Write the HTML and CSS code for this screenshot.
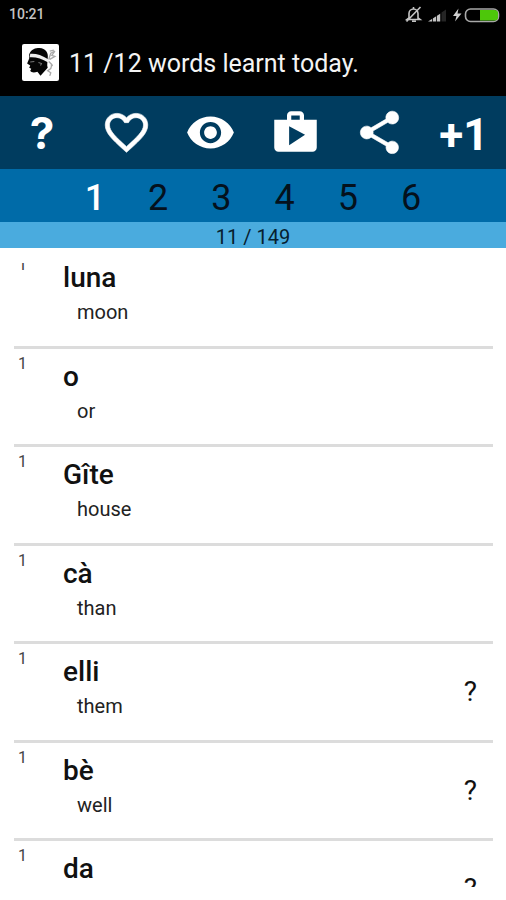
FILE: index.html
```html
<!DOCTYPE html>
<html lang="en">
<head>
<meta charset="utf-8">
<meta name="viewport" content="width=device-width, initial-scale=1">
<title>Words learnt</title>
<link rel="stylesheet" href="styles.css">
</head>
<body>
<div class="status">
  <span class="clock">10:21</span>
  <svg class="status-icons" viewBox="0 0 96 18" aria-hidden="true">
    <g fill="none" stroke="#c4c4c4" stroke-width="1.6">
      <path d="M4 13V8.500a4.500 4.500 0 0 1 9 0V13l2 1.500H2L4 13M7 16.200h4M8.500 4V2M1.500 16.500L15.500 2"/>
    </g>
    <path d="M23 16.500L35.500 8.500v8z" fill="#c4c4c4"/>
    <path d="M27.500 9v8M31.500 7v10M35.800 6v11" stroke="#000" stroke-width=".8"/>
    <path d="M36.500 7.500L41 4.500v12h-4.500z" fill="#252525"/>
    <path d="M53.500 3.500L48 11h3.500l-1.500 5.500 6.500-8h-4z" fill="#d0d0d0"/>
    <rect x="60.500" y="4" width="33" height="12.500" rx="5" fill="#000" stroke="#a8a8a8" stroke-width="1.600"/>
    <path d="M75 5h14.500q3.500 0 3.500 3.500v3.500q0 3.500-3.500 3.500H75z" fill="#4dc70a"/>
  </svg>
</div>
<header class="title-bar">
  <svg class="logo" viewBox="0 0 36 36" aria-hidden="true">
    <rect width="36" height="36" rx="2" fill="#fff"/>
    <path d="M7 10C9 5 13 4 17 4c6 0 9 5 8 10 0 4-1 6 0 9l-7 8-3-4c-3 1-6 1-7-1l1-2-2-1 1-2-3-2 2-5z" fill="#050505"/>
    <path d="M8 9.500c5-.5 11 1 18 5.500l-.5 3C19 14 13 12.500 7.500 13z" fill="#eee"/>
    <path d="M8 17.500l4-.5M16 18l3 1-1 2" fill="none" stroke="#777" stroke-width="1"/>
    <path d="M26 15l2-6 4-2-3 4 3 1-5 3M27 7l4-1M26 17l3 3-1 4-3 2 3 2-1 3M28 20l2 1" fill="none" stroke="#aaa" stroke-width="1.300"/>
  </svg>
  <h1>11 /12 words learnt today.</h1>
</header>
<nav class="toolbar">
  <button type="button" class="glyph help" aria-label="Help">?</button>
  <button type="button" aria-label="Favourites"><svg viewBox="0 0 24 24"><path d="M16.500 3c-1.740 0-3.410.81-4.500 2.090C10.910 3.810 9.240 3 7.500 3 4.420 3 2 5.420 2 8.500c0 3.780 3.400 6.860 8.550 11.540L12 21.350l1.450-1.320C18.600 15.360 22 12.280 22 8.500 22 5.420 19.580 3 16.500 3zm-4.400 15.550l-.1.100-.1-.1C7.140 14.240 4 11.390 4 8.500 4 6.500 5.500 5 7.500 5c1.540 0 3.040.99 3.570 2.360h1.870C13.460 5.990 14.960 5 16.500 5c2 0 3.500 1.500 3.500 3.500 0 2.890-3.140 5.740-7.900 10.050z" stroke="currentColor" stroke-width=".3"/></svg></button>
  <button type="button" aria-label="Show"><svg viewBox="0 0 24 24"><path d="M12 4.500C7 4.500 2.730 7.610 1 12c1.730 4.390 6 7.500 11 7.500s9.270-3.110 11-7.500c-1.730-4.390-6-7.500-11-7.500zM12 17c-2.760 0-5-2.240-5-5s2.240-5 5-5 5 2.240 5 5-2.240 5-5 5zm0-8c-1.660 0-3 1.340-3 3s1.340 3 3 3 3-1.340 3-3-1.340-3-3-3z"/></svg></button>
  <button type="button" aria-label="Store"><svg viewBox="0 0 24 24"><path d="M16 6V4c0-1.110-.89-2-2-2h-4c-1.110 0-2 .89-2 2v2H2v13c0 1.110.89 2 2 2h16c1.110 0 2-.89 2-2V6h-6zm-6-2h4v2h-4V4zM9 18V9l7.500 4L9 18z"/></svg></button>
  <button type="button" aria-label="Share"><svg viewBox="0 0 24 24"><path d="M18 16.080c-.76 0-1.440.3-1.960.77L8.910 12.700c.05-.23.09-.46.09-.7s-.04-.47-.09-.7l7.050-4.110c.54.5 1.250.81 2.040.81 1.660 0 3-1.340 3-3s-1.340-3-3-3-3 1.340-3 3c0 .24.04.47.09.7L8.040 9.810C7.500 9.310 6.790 9 6 9c-1.660 0-3 1.340-3 3s1.340 3 3 3c.79 0 1.500-.31 2.040-.81l7.120 4.160c-.05.21-.08.43-.08.65 0 1.610 1.310 2.920 2.920 2.920s2.920-1.310 2.920-2.920-1.310-2.920-2.920-2.920z" stroke="currentColor" stroke-width=".3"/></svg></button>
  <button type="button" class="glyph">+1</button>
</nav>
<nav class="levels">
  <button type="button" class="current">1</button>
  <button type="button">2</button>
  <button type="button">3</button>
  <button type="button">4</button>
  <button type="button">5</button>
  <button type="button">6</button>
</nav>
<div class="progress">11 / 149</div>
<main class="words">
  <article class="row"><span class="level scrolled">1</span><div class="entry"><h2>luna</h2><p>moon</p></div></article>
  <article class="row"><span class="level">1</span><div class="entry"><h2>o</h2><p>or</p></div></article>
  <article class="row"><span class="level">1</span><div class="entry"><h2>Gîte</h2><p>house</p></div></article>
  <article class="row"><span class="level">1</span><div class="entry"><h2>cà</h2><p>than</p></div></article>
  <article class="row"><span class="level">1</span><div class="entry"><h2>elli</h2><p>them</p></div><span class="mark">?</span></article>
  <article class="row"><span class="level">1</span><div class="entry"><h2>bè</h2><p>well</p></div><span class="mark">?</span></article>
  <article class="row"><span class="level">1</span><div class="entry"><h2>da</h2></div><span class="mark">?</span></article>
</main>
</body>
</html>
```
FILE: styles.css
```css
* { box-sizing: border-box; }
body {
  margin: 0;
  height: 100vh;
  display: flex;
  flex-direction: column;
  background: #fff;
  color: #111;
  font-family: Roboto, "Liberation Sans", sans-serif;
  overflow: hidden;
}
h1, h2, p { margin: 0; }
button {
  display: flex;
  align-items: center;
  justify-content: center;
  padding: 0;
  border: 0;
  background: none;
  color: inherit;
  font: inherit;
}
.status {
  display: flex;
  align-items: center;
  justify-content: space-between;
  height: 28px;
  padding: 0 5px 0 9px;
  background: #000;
  color: #c4c4c4;
}
.clock { font-size: 14px; font-weight: 500; line-height: 30px; }
.status-icons { width: 96px; height: 18px; }
.title-bar {
  display: flex;
  align-items: center;
  gap: 10px;
  height: 68px;
  padding: 0 22px;
  background: #000;
  color: #f4f4f4;
}
.logo { width: 37px; height: 37px; flex: none; }
h1 { padding-top: 4px; font-size: 25px; font-weight: 400; line-height: 32px; white-space: nowrap; }
.toolbar {
  display: grid;
  grid-template-columns: repeat(6, 1fr);
  height: 73px;
  background: #003c5f;
  color: #fff;
}
.toolbar svg { width: 51px; height: 51px; fill: currentColor; }
.glyph { padding-top: 4px; font-size: 44px; font-weight: 700; }
.help { padding-top: 1px; font-family: Inter, sans-serif; }
.levels {
  display: grid;
  grid-template-columns: repeat(6, 1fr);
  height: 53px;
  padding: 4px 12.5% 0;
  background: #006ba8;
  color: #04111c;
  font-size: 36px;
}
.levels .current { color: #fff; font-weight: 500; }
.progress {
  height: 26px;
  padding-top: 2px;
  background: #4aabde;
  color: #06202f;
  font-size: 20px;
  line-height: 26px;
  text-align: center;
}
.words {
  flex: 1;
  display: grid;
  grid-template-rows: repeat(6, 1fr) 46px;
  min-height: 0;
  margin: 2px 13px 13px 14px;
  overflow: hidden;
}
.row {
  display: flex;
  align-items: flex-start;
  min-height: 0;
  border-bottom: 3px solid #dcdcdc;
}
.row:last-child { border-bottom: 0; }
.level {
  width: 49px;
  padding: 5px 0 0 4px;
  color: #444;
  font-size: 16px;
  line-height: 20px;
}
.scrolled { clip-path: inset(13px 0 0 0); }
.entry { flex: 1; padding-top: 12px; }
h2 { font-size: 28px; font-weight: 500; line-height: 32px; }
p { padding: 6px 0 0 14px; color: #222; font-size: 20px; line-height: 24px; }
.mark {
  padding: 32px 16px 0 0;
  font-size: 28px;
  line-height: 32px;
}
```
